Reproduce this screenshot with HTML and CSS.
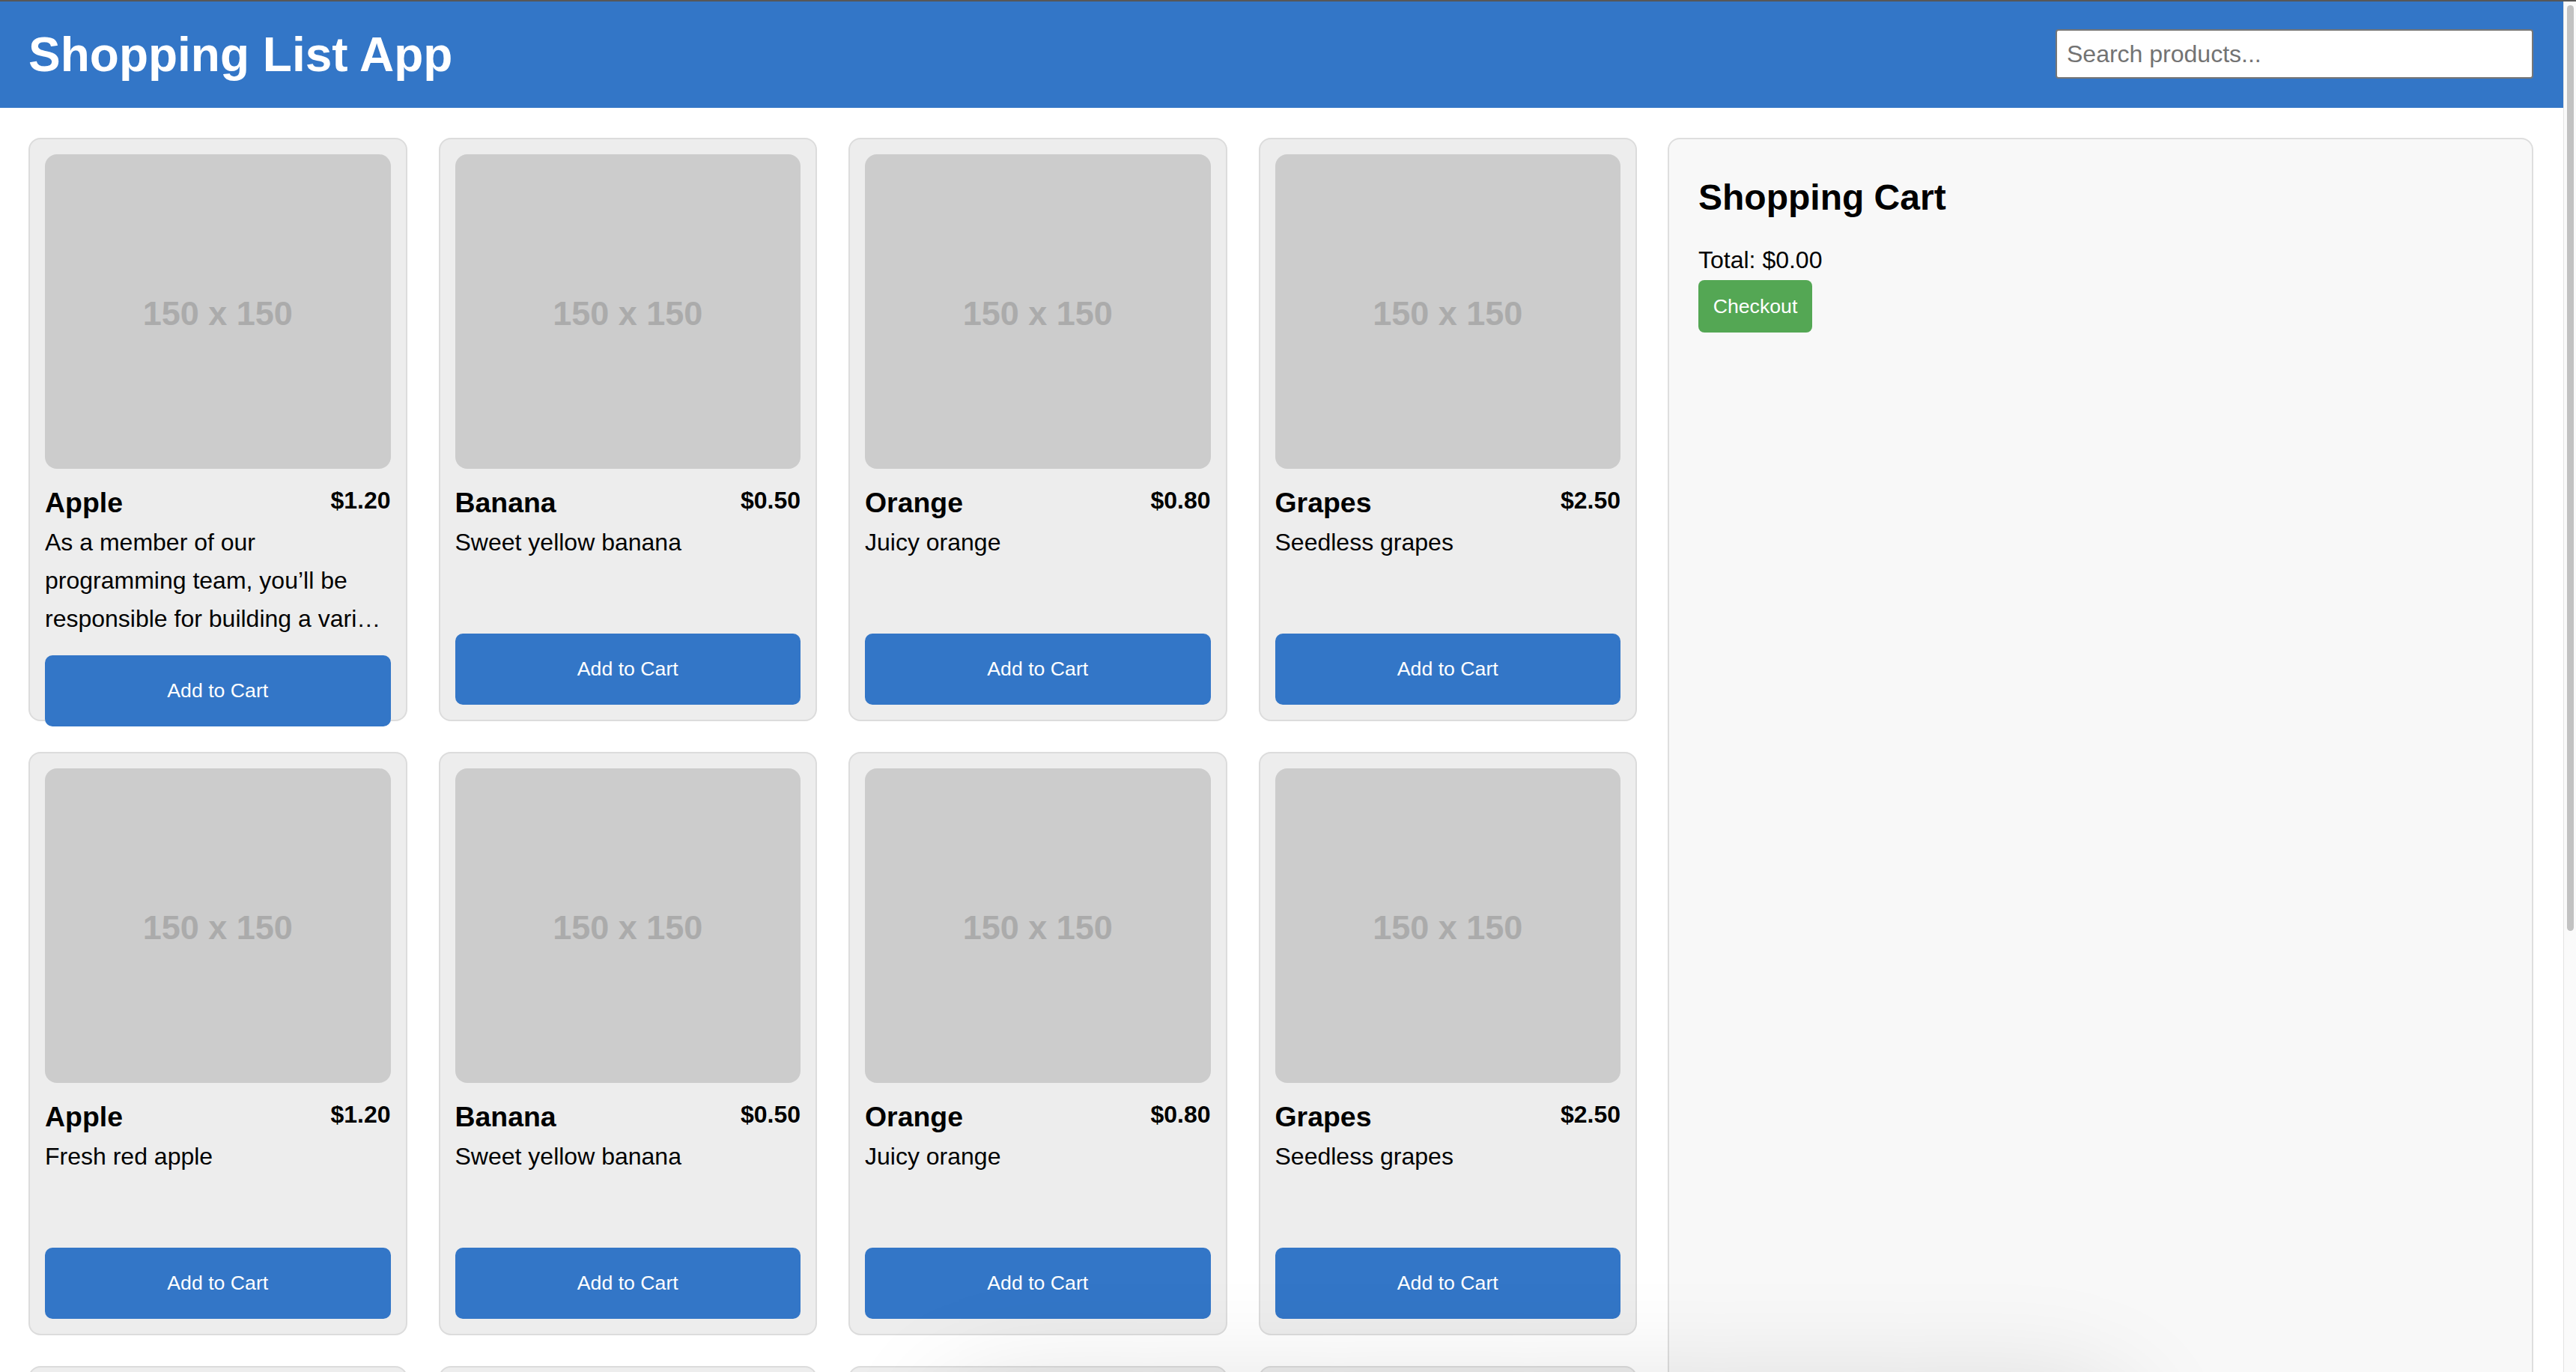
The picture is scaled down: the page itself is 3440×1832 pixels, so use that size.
FILE: index.html
```html
<!DOCTYPE html>
<html lang="en">
<head>
<meta charset="utf-8">
<title>Shopping List App</title>
<link rel="stylesheet" href="styles.css">
</head>
<body>
<div class="topline"></div>
<div class="frame">
  <div class="page">
    <header class="app-header">
      <h1 class="app-title">Shopping List App</h1>
      <input class="search" type="text" placeholder="Search products...">
    </header>
    <main class="main">
      <section class="products">
        <article class="card">
          <div class="thumb-img">150 x 150</div>
          <div class="card-head"><h3 class="card-name">Apple</h3><span class="card-price">$1.20</span></div>
          <p class="card-desc">As a member of our programming team, you’ll be responsible for building a variety of applications and tools for our customers.</p>
          <button class="add-btn">Add to Cart</button>
        </article>
        <article class="card">
          <div class="thumb-img">150 x 150</div>
          <div class="card-head"><h3 class="card-name">Banana</h3><span class="card-price">$0.50</span></div>
          <p class="card-desc">Sweet yellow banana</p>
          <button class="add-btn">Add to Cart</button>
        </article>
        <article class="card">
          <div class="thumb-img">150 x 150</div>
          <div class="card-head"><h3 class="card-name">Orange</h3><span class="card-price">$0.80</span></div>
          <p class="card-desc">Juicy orange</p>
          <button class="add-btn">Add to Cart</button>
        </article>
        <article class="card">
          <div class="thumb-img">150 x 150</div>
          <div class="card-head"><h3 class="card-name">Grapes</h3><span class="card-price">$2.50</span></div>
          <p class="card-desc">Seedless grapes</p>
          <button class="add-btn">Add to Cart</button>
        </article>

        <article class="card">
          <div class="thumb-img">150 x 150</div>
          <div class="card-head"><h3 class="card-name">Apple</h3><span class="card-price">$1.20</span></div>
          <p class="card-desc">Fresh red apple</p>
          <button class="add-btn">Add to Cart</button>
        </article>
        <article class="card">
          <div class="thumb-img">150 x 150</div>
          <div class="card-head"><h3 class="card-name">Banana</h3><span class="card-price">$0.50</span></div>
          <p class="card-desc">Sweet yellow banana</p>
          <button class="add-btn">Add to Cart</button>
        </article>
        <article class="card">
          <div class="thumb-img">150 x 150</div>
          <div class="card-head"><h3 class="card-name">Orange</h3><span class="card-price">$0.80</span></div>
          <p class="card-desc">Juicy orange</p>
          <button class="add-btn">Add to Cart</button>
        </article>
        <article class="card">
          <div class="thumb-img">150 x 150</div>
          <div class="card-head"><h3 class="card-name">Grapes</h3><span class="card-price">$2.50</span></div>
          <p class="card-desc">Seedless grapes</p>
          <button class="add-btn">Add to Cart</button>
        </article>

        <article class="card">
          <div class="thumb-img">150 x 150</div>
          <div class="card-head"><h3 class="card-name">Apple</h3><span class="card-price">$1.20</span></div>
          <p class="card-desc">Fresh red apple</p>
          <button class="add-btn">Add to Cart</button>
        </article>
        <article class="card">
          <div class="thumb-img">150 x 150</div>
          <div class="card-head"><h3 class="card-name">Banana</h3><span class="card-price">$0.50</span></div>
          <p class="card-desc">Sweet yellow banana</p>
          <button class="add-btn">Add to Cart</button>
        </article>
        <article class="card">
          <div class="thumb-img">150 x 150</div>
          <div class="card-head"><h3 class="card-name">Orange</h3><span class="card-price">$0.80</span></div>
          <p class="card-desc">Juicy orange</p>
          <button class="add-btn">Add to Cart</button>
        </article>
        <article class="card">
          <div class="thumb-img">150 x 150</div>
          <div class="card-head"><h3 class="card-name">Grapes</h3><span class="card-price">$2.50</span></div>
          <p class="card-desc">Seedless grapes</p>
          <button class="add-btn">Add to Cart</button>
        </article>
      </section>
      <aside class="cart">
        <h2 class="cart-title">Shopping Cart</h2>
        <p class="cart-total">Total: $0.00</p>
        <button class="checkout">Checkout</button>
      </aside>
    </main>
  </div>
  <div class="scrollbar"><div class="scroll-thumb"></div></div>
</div>
<div class="bottom-shadow"></div>
</body>
</html>
```

FILE: styles.css
```css
* {
  box-sizing: border-box;
}

html, body {
  margin: 0;
  padding: 0;
  height: 100%;
  overflow: hidden;
  background: #ffffff;
}

body {
  display: flex;
  flex-direction: column;
  font-family: "Liberation Sans", Arial, Helvetica, sans-serif;
  color: #000;
}

.topline {
  height: 2px;
  flex: none;
  background: #575757;
}

.frame {
  flex: 1;
  min-height: 0;
  display: flex;
}

.page {
  width: 3423px;
  flex: none;
  overflow: hidden;
}

.scrollbar {
  flex: 1;
  background: #fafafa;
  border-left: 1px solid #e3e3e3;
  padding: 5px 3px 0 4px;
}

.scroll-thumb {
  height: 1236px;
  background: #c2c2c2;
  border-radius: 6px;
}

/* Header */
.app-header {
  height: 142px;
  background: #3376c7;
  display: flex;
  align-items: center;
  justify-content: space-between;
  padding: 0 40px 0 38px;
}

.app-title {
  margin: 0;
  font-size: 64px;
  line-height: 74px;
  font-weight: bold;
  color: #ffffff;
}

.search {
  width: 638px;
  height: 66px;
  margin-top: -2px;
  padding: 0 13px;
  border: 2px solid #767676;
  border-radius: 4px;
  background: #ffffff;
  font-family: "Liberation Sans", Arial, Helvetica, sans-serif;
  font-size: 32px;
  color: #000;
  outline: none;
}

.search::placeholder {
  color: #737373;
}

/* Main */
.main {
  display: flex;
  align-items: stretch;
  gap: 41px;
  padding: 40px 40px 40px 38px;
}

.products {
  width: 2148px;
  flex: none;
  display: grid;
  grid-template-columns: repeat(4, 1fr);
  column-gap: 42px;
  row-gap: 41px;
  align-content: start;
}

.card {
  height: 779px;
  display: flex;
  flex-direction: column;
  padding: 20px;
  background: #ededed;
  border: 2px solid #dcdcdc;
  border-radius: 16px;
}

.card > * {
  flex-shrink: 0;
}

.thumb-img {
  height: 420px;
  border-radius: 16px;
  background: #cccccc;
  display: flex;
  align-items: center;
  justify-content: center;
  font-size: 45px;
  font-weight: bold;
  color: #ababab;
  padding-top: 6px;
}

.card-head {
  margin-top: 24px;
  display: flex;
  align-items: flex-start;
  justify-content: space-between;
}

.card-name {
  margin: 0;
  font-size: 37.44px;
  line-height: 43px;
  font-weight: bold;
}

.card-price {
  font-size: 32px;
  line-height: 37px;
  font-weight: bold;
}

.card-desc {
  margin: 6px 0 22px;
  font-size: 32px;
  line-height: 51.2px;
  display: -webkit-box;
  -webkit-box-orient: vertical;
  -webkit-line-clamp: 3;
  overflow: hidden;
}

.add-btn {
  margin-top: auto;
  height: 95px;
  border: none;
  border-radius: 10px;
  background: #3376c7;
  color: #ffffff;
  font-family: "Liberation Sans", Arial, Helvetica, sans-serif;
  font-size: 26.67px;
  padding: 0;
}

/* Cart */
.cart {
  flex: 1;
  background: #f8f8f8;
  border: 2px solid #dedede;
  border-radius: 16px;
  padding: 40px 40px 40px 39px;
}

.cart-title {
  margin: 10px 0 0;
  font-size: 48px;
  line-height: 55px;
  font-weight: bold;
}

.cart-total {
  margin: 38px 0 0;
  font-size: 32px;
  line-height: 37px;
}

.checkout {
  margin-top: 8px;
  width: 152px;
  height: 70px;
  border: none;
  border-radius: 8px;
  background: #54a754;
  color: #ffffff;
  font-family: "Liberation Sans", Arial, Helvetica, sans-serif;
  font-size: 26.67px;
  padding: 0;
}

/* faint shadow at the bottom edge of the capture */
.bottom-shadow {
  position: fixed;
  left: 1300px;
  width: 1500px;
  top: 1900px;
  height: 80px;
  border-radius: 40px;
  box-shadow: 0 0 150px 50px rgba(0, 0, 0, 0.13);
  pointer-events: none;
}
```
